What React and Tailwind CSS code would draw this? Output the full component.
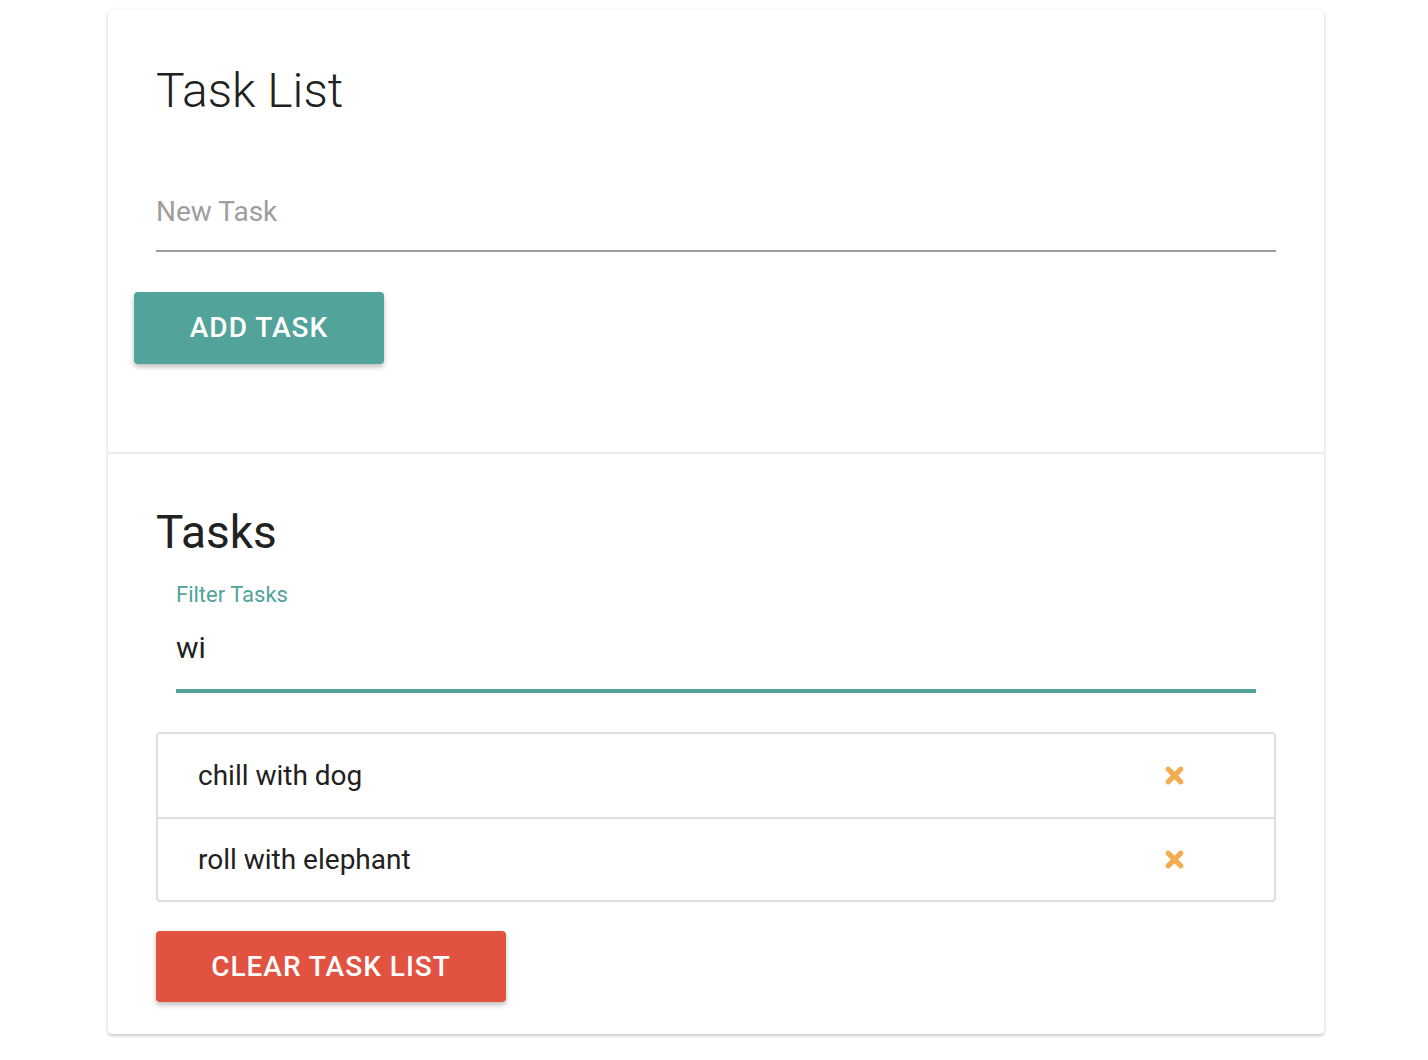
import { useState } from 'react'

const tasks = ['chill with dog', 'roll with elephant']

function CloseIcon() {
  return (
    <svg width="21" height="21" viewBox="0 0 20 20" className="text-[#f5ab52]">
      <path d="M4 4 L16 16 M16 4 L4 16" stroke="currentColor" strokeWidth="5" strokeLinecap="round" fill="none" />
    </svg>
  )
}

export default function App() {
  const [filter, setFilter] = useState('wi')
  const [newTask, setNewTask] = useState('')

  return (
    <div className="min-h-screen bg-white pt-[10px] font-['Roboto',sans-serif]">
      <div className="ml-[108px] w-[1216px] rounded-[4px] bg-white shadow-[0_2px_3px_rgba(0,0,0,0.18),0_0_6px_rgba(0,0,0,0.06)]">
        {/* Add task */}
        <div className="px-12 pt-[55px] pb-[88px]">
          <h1 className="text-[48px] leading-[52px] font-light text-[#212121]">Task List</h1>
          <input
            value={newTask}
            onChange={(e) => setNewTask(e.target.value)}
            placeholder="New Task"
            className="mt-[55px] block h-[80px] w-full border-b-2 border-[#9e9e9e] bg-transparent text-[28px] text-[#212121] outline-none placeholder:text-[#9e9e9e]"
          />
          <button className="-ml-[22px] mt-[40px] h-[72px] w-[250px] rounded-[4px] bg-[#52a39a] text-[28px] font-medium uppercase tracking-[1px] text-white shadow-[0_3px_5px_rgba(0,0,0,0.25)]">
            Add Task
          </button>
        </div>

        <div className="h-[2px] bg-[#ebebeb]" />

        {/* Tasks */}
        <div className="px-12 pt-[55px] pb-[32px]">
          <h2 className="text-[46px] leading-[46px] text-[#212121]">Tasks</h2>
          <div className="px-5">
            <label className="mt-[28px] block text-[22px] leading-[23px] text-[#52a39a]">Filter Tasks</label>
            <input
              value={filter}
              onChange={(e) => setFilter(e.target.value)}
              className="block h-[87px] w-full border-b-4 border-[#52a39a] bg-transparent text-[30px] text-[#212121] outline-none"
            />
          </div>

          <ul className="mt-[39px] rounded-[4px] border-2 border-[#e0e0e0]">
            {tasks.map((t, i) => (
              <li
                key={t}
                className={`flex h-[83px] items-center justify-between pl-[40px] pr-[89px] text-[28px] text-[#212121] ${
                  i > 0 ? 'border-t-2 border-[#e0e0e0]' : ''
                }`}
              >
                <span>{t}</span>
                <CloseIcon />
              </li>
            ))}
          </ul>

          <button className="mt-[29px] h-[71px] w-[350px] rounded-[4px] bg-[#e15241] text-[28px] font-medium uppercase tracking-[1px] text-white shadow-[0_3px_5px_rgba(0,0,0,0.25)]">
            Clear Task List
          </button>
        </div>
      </div>
    </div>
  )
}
